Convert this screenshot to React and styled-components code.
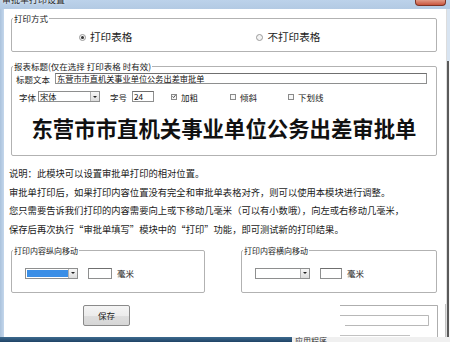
import React from "react";
import styled, { createGlobalStyle } from "styled-components";

const Global = createGlobalStyle`
  html, body { margin: 0; padding: 0; }
  body {
    width: 450px; height: 342px; overflow: hidden; background: #fff;
    font-family: "Noto Sans CJK SC", "Noto Sans", sans-serif; color: #1a1a1a;
  }
  * { box-sizing: border-box; }
`;

const Window = styled.div`
  position: relative;
  width: 450px; height: 342px;
  display: flex; flex-direction: column;
  background: #b9cfe6;
`;

const TitleBar = styled.div`
  height: 9px; flex: none;
  display: flex; justify-content: space-between; align-items: flex-start;
  background: linear-gradient(#bcd2ea, #b3cae3);
  overflow: hidden;
`;

const TitleText = styled.div`
  font-size: 9px; line-height: 9px; margin: -5px 0 0 2px;
  color: #2a2a2a; text-shadow: 0 0 3px #fff;
`;

const CloseBtn = styled.div`
  width: 31px; height: 6px; margin-right: 4px;
  background: linear-gradient(#e29a86, #c8553e);
  border: 1px solid #7d3324; border-top: none;
  border-radius: 0 0 4px 4px;
`;

const Body = styled.div`
  flex: 1; display: flex; min-height: 0;
`;

const LeftFrame = styled.div`
  width: 4px; flex: none; background: linear-gradient(90deg, #aac2dc, #c4d7ec);
`;

const RightFrame = styled.div`
  width: 4px; flex: none;
  background: linear-gradient(90deg, #d8e4f1 0 3px, #eef3f8 3px);
  border-left: 1px solid #ddd;
  display: flex; flex-direction: column;
`;

const RightShadow = styled.div`
  margin-top: 52px; flex: 1;
  border-left: 2px solid #5a5a5a; background: #f6f6f6;
`;

const Content = styled.div`
  flex: 1; background: #fff;
  padding: 4px 7px 0 7px;
  display: flex; flex-direction: column; align-items: flex-start;
`;

const Group = styled.fieldset`
  margin: ${p => p.$mt || 0}px 0 0 0;
  padding: 0;
  min-width: 0;
  width: ${p => p.$w}px;
  border: 1px solid #b2b2b2;
  border-radius: 2px;
  box-shadow: inset 1px 1px 0 #fff;
`;

const Legend = styled.legend`
  font-size: ${p => p.$fs || 8.5}px; line-height: 10px;
  padding: 0 1px; margin-left: 1px; color: #222;
`;

const RadioRow = styled.div`
  height: 28px; display: flex; align-items: center;
  padding-left: 67px; gap: 124px;
`;

const RadioItem = styled.label`
  display: flex; align-items: center; gap: 4px;
  font-size: 10.6px; line-height: 12px; color: #222;
`;

const RadioCircle = styled.span`
  width: 7px; height: 7px; border-radius: 50%;
  border: 1px solid #9a9a9a; background: #f4f4f4;
  display: flex; align-items: center; justify-content: center;
  &::after {
    content: ""; width: 3px; height: 3px; border-radius: 50%;
    background: ${p => (p.$on ? "#333" : "transparent")};
  }
`;

const Row = styled.div`
  display: flex; align-items: center;
  margin-top: ${p => p.$mt || 0}px;
  padding: 0 9px 0 4px;
  height: ${p => p.$h || 11}px;
`;

const Label = styled.span`
  font-size: 8.5px; line-height: 10px; white-space: nowrap; color: #222;
  margin-left: ${p => p.$ml || 0}px;
`;

const TextBox = styled.div`
  height: ${p => p.$h || 11}px;
  width: ${p => (p.$w ? p.$w + "px" : "auto")};
  flex: ${p => (p.$w ? "none" : "1")};
  margin-left: ${p => p.$ml || 0}px;
  border: 1px solid #8e8f8f; border-top-color: #6f6f6f;
  background: #fff;
  font-size: 8.2px; line-height: 9px; padding-left: 1px;
  white-space: nowrap; overflow: hidden; color: #111;
`;

const Select = styled.div`
  height: ${p => p.$h || 11}px; width: ${p => p.$w}px; flex: none;
  margin-left: ${p => p.$ml || 0}px;
  border: 1px solid #8e8f8f; background: #fff;
  display: flex; align-items: stretch;
`;

const SelectValue = styled.div`
  flex: 1; font-size: 8.2px; line-height: 9px; padding-left: 1px;
  background: ${p => (p.$hl ? "#3a8ee6" : "#fff")};
  margin: ${p => (p.$hl ? "1px 0 1px 1px" : "0")};
  color: #111;
`;

const SelectArrow = styled.div`
  width: 9px; flex: none;
  border-left: 1px solid #b0b0b0;
  background: linear-gradient(#f7f7f7, #dcdcdc);
  display: flex; align-items: center; justify-content: center;
  &::after {
    content: ""; border-left: 2px solid transparent; border-right: 2px solid transparent;
    border-top: 2.5px solid #222;
  }
`;

const Check = styled.span`
  width: 6px; height: 6px; flex: none;
  margin-left: ${p => p.$ml || 0}px; margin-right: 4px;
  border: 1px solid #8a8a8a; background: #f7f7f7;
  display: flex; align-items: center; justify-content: center;
`;

const BigTitle = styled.div`
  align-self: stretch; text-align: center;
  font-size: 21.4px; line-height: 22px; font-weight: 700;
  margin: 15px 0 16px; color: #111; letter-spacing: 0;
  white-space: nowrap;
`;

const Notes = styled.div`
  margin: 8px 0 0 -2px;
  font-size: 9.3px; line-height: 18.7px; color: #1a1a1a; white-space: nowrap;
`;

const GroupsRow = styled.div`
  display: flex; gap: 36px; margin-top: 7px;
`;

const MoveRow = styled.div`
  display: flex; align-items: center;
  margin-top: 12px; margin-bottom: 13px; padding-left: 13px; height: 11px;
`;

const SaveButton = styled.button`
  margin: 12px 0 0 72px;
  width: 47px; height: 21px; padding: 0;
  border: 1px solid #8a8a8a; border-radius: 2px;
  background: linear-gradient(#f4f4f4 0%, #ececec 50%, #dedede 51%, #d6d6d6 100%);
  font-family: inherit; font-size: 8.5px; color: #222;
`;

const TaskBar = styled.div`
  height: 5px; flex: none; display: flex;
`;

const TaskDark = styled.div`
  width: 292px; background: linear-gradient(#3d6a8e, #1f4366);
`;

const TaskRest = styled.div`
  flex: 1; background: #f0f0f0; overflow: hidden;
  font-size: 8px; line-height: 8px; color: #333; padding-left: 3px;
`;

const Ghost = styled.svg`
  position: absolute; right: 0; bottom: 0;
  width: 150px; height: 52px; pointer-events: none;
`;

function Radio({ on, children }) {
  return (
    <RadioItem>
      <RadioCircle $on={on} />
      {children}
    </RadioItem>
  );
}

function CheckMark() {
  return (
    <svg width="5" height="5" viewBox="0 0 5 5">
      <path d="M0.6 2.4 L2 3.8 L4.4 0.8" fill="none" stroke="#222" strokeWidth="1" />
    </svg>
  );
}

export default function App() {
  return (
    <>
      <Global />
      <Window>
        <TitleBar>
          <TitleText>审批单打印设置</TitleText>
          <CloseBtn />
        </TitleBar>
        <Body>
          <LeftFrame />
          <Content>
            <Group $w={426}>
              <Legend>打印方式</Legend>
              <RadioRow>
                <Radio on>打印表格</Radio>
                <Radio>不打印表格</Radio>
              </RadioRow>
            </Group>

            <Group $w={426} $mt={9}>
              <Legend>报表标题(仅在选择 打印表格 时有效)</Legend>
              <Row $mt={2} $h={11}>
                <Label>标题文本</Label>
                <TextBox $ml={5}>东营市市直机关事业单位公务出差审批单</TextBox>
              </Row>
              <Row $mt={7} $h={11}>
                <Label $ml={3}>字体</Label>
                <Select $w={62} $ml={2}>
                  <SelectValue>宋体</SelectValue>
                  <SelectArrow />
                </Select>
                <Label $ml={10}>字号</Label>
                <TextBox $w={22} $ml={5}>24</TextBox>
                <Check $ml={17}><CheckMark /></Check>
                <Label>加粗</Label>
                <Check $ml={32} />
                <Label>倾斜</Label>
                <Check $ml={31} />
                <Label>下划线</Label>
              </Row>
              <BigTitle>东营市市直机关事业单位公务出差审批单</BigTitle>
            </Group>

            <Notes>
              <div>说明：此模块可以设置审批单打印的相对位置。</div>
              <div>审批单打印后，如果打印内容位置没有完全和审批单表格对齐，则可以使用本模块进行调整。</div>
              <div>您只需要告诉我们打印的内容需要向上或下移动几毫米（可以有小数哦），向左或右移动几毫米，</div>
              <div>保存后再次执行“审批单填写”模块中的“打印”功能，即可测试新的打印结果。</div>
            </Notes>

            <GroupsRow>
              <Group $w={194}>
                <Legend $fs={8}>打印内容纵向移动</Legend>
                <MoveRow>
                  <Select $w={53} $h={11}>
                    <SelectValue $hl />
                    <SelectArrow />
                  </Select>
                  <TextBox $w={24} $ml={10} />
                  <Label $ml={5}>毫米</Label>
                </MoveRow>
              </Group>
              <Group $w={196}>
                <Legend $fs={8}>打印内容横向移动</Legend>
                <MoveRow>
                  <Select $w={55} $h={11}>
                    <SelectValue />
                    <SelectArrow />
                  </Select>
                  <TextBox $w={22} $ml={10} />
                  <Label $ml={5}>毫米</Label>
                </MoveRow>
              </Group>
            </GroupsRow>

            <SaveButton>保存</SaveButton>
          </Content>
          <RightFrame>
            <RightShadow />
          </RightFrame>
        </Body>
        <TaskBar>
          <TaskDark />
          <TaskRest>应用程序</TaskRest>
        </TaskBar>
        <Ghost viewBox="0 0 150 52">
          <g fill="none" stroke="#9a9a9a" strokeWidth="1">
            <path d="M40 15.5 H137.5 V47" opacity="0.8" />
            <path d="M145.5 14 V47" opacity="0.6" />
            <path d="M40 25.5 H128.5 V35.5 H45" opacity="0.7" />
            <path d="M40 45.5 H110" opacity="0.6" />
          </g>
        </Ghost>
      </Window>
    </>
  );
}
